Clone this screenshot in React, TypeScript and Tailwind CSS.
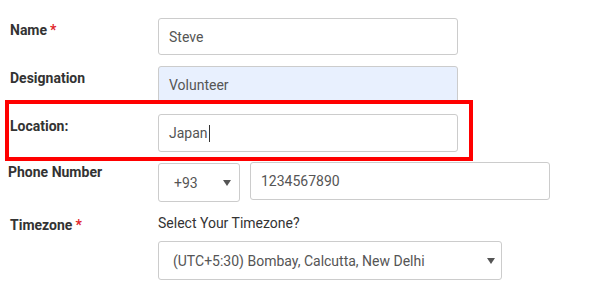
import React from 'react';

const Star = () => <span className="ml-[3px] text-[#e0242b]">*</span>;

const Arrow = () => (
  <svg width="8" height="6" viewBox="0 0 8 6" className="fill-[#555]">
    <path d="M0 0h8L4 6z" />
  </svg>
);

const Field = ({ children, className = '' }: { children: React.ReactNode; className?: string }) => (
  <div
    className={`flex items-center rounded-[3px] border border-[#ccc] px-[10px] text-[14px] text-[#555] ${className}`}
  >
    {children}
  </div>
);

const App = () => {
  return (
    <div className="relative h-[287px] w-[596px] bg-white pt-[18px] font-['Roboto',sans-serif] leading-5">
      {/* Name */}
      <div className="flex items-start">
        <div className="w-[158px] pl-[10px] pt-[2px] text-[14px] font-bold text-[#333]">
          Name<Star />
        </div>
        <Field className="h-[37px] w-[300px]">Steve</Field>
      </div>

      {/* Designation */}
      <div className="mt-[11px] flex items-start">
        <div className="w-[158px] pl-[10px] pt-[2px] text-[14px] font-bold text-[#333]">Designation</div>
        <Field className="h-[38px] w-[300px] bg-[#e8f0fe] text-[#222]">Volunteer</Field>
      </div>

      {/* Location */}
      <div className="mt-[10px] flex items-start">
        <div className="w-[158px] pl-[10px] pt-[2px] text-[14px] font-bold text-[#333]">Location:</div>
        <Field className="h-[38px] w-[300px]">
          Japan<span className="ml-[1px] inline-block h-[17px] w-px bg-[#333]" />
        </Field>
      </div>

      {/* Phone */}
      <div className="mt-[10px] flex items-start">
        <div className="w-[158px] pl-[8px] text-[14px] font-bold text-[#333]">Phone Number</div>
        <Field className="mt-[1px] h-[39px] w-[82px] justify-between pl-[15px] pr-[8px]">
          <span>+93</span>
          <Arrow />
        </Field>
        <Field className="ml-[10px] h-[38px] w-[300px]">1234567890</Field>
      </div>

      {/* Timezone */}
      <div className="mt-[11px] flex items-start">
        <div className="w-[158px] pl-[10px] pt-[2px] text-[14px] font-bold text-[#333]">
          Timezone<Star />
        </div>
        <div className="flex flex-col">
          <div className="text-[14px] text-[#333]">Select Your Timezone?</div>
          <Field className="mt-[8px] h-[39px] w-[344px] justify-between pl-[14px] pr-[6px]">
            <span>(UTC+5:30) Bombay, Calcutta, New Delhi</span>
            <Arrow />
          </Field>
        </div>
      </div>

      {/* highlight annotation */}
      <div className="pointer-events-none absolute left-[5px] top-[100px] h-[61px] w-[468px] border-4 border-[#ff0000]" />
    </div>
  );
};

export default App;
